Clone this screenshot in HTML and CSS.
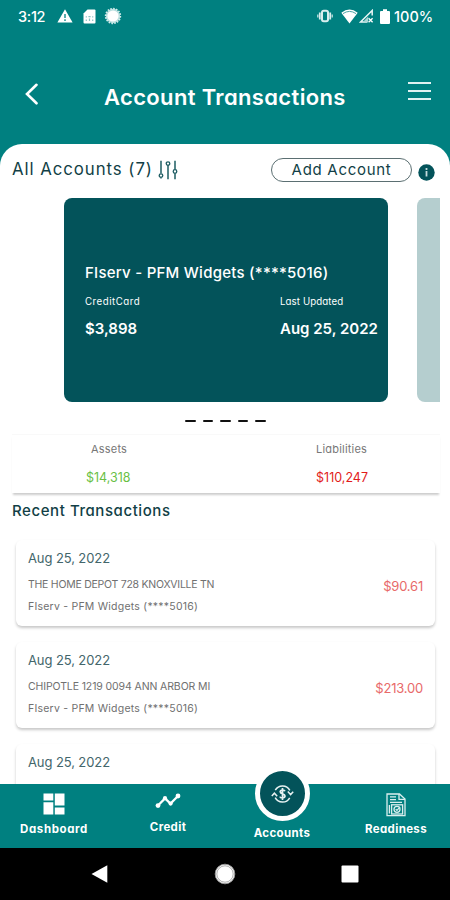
FILE: index.html
```
<!DOCTYPE html>
<html lang="en">
<head>
    <meta charset="UTF-8">
    <meta name="viewport" content="width=device-width, initial-scale=1.0">
    <title>Account Transactions</title>
    <link rel="stylesheet" href="styles.css">
</head>
<body>
    <div class="app">
        <!-- Status bar -->
        <div class="status-bar">
            <span class="time">3:12</span>
            <svg class="warn-icon" width="16" height="14" viewBox="0 0 16 14">
                <path d="M8 0.3 L15.6 13.6 H0.4 Z" fill="#fff"/>
                <path d="M8 5v4M8 10.3v1.6" stroke="#008080" stroke-width="1.3"/>
            </svg>
            <svg class="sim-icon" width="13" height="15" viewBox="0 0 13 15">
                <path d="M4.5 0.5H11.5a1 1 0 0 1 1 1V13.5a1 1 0 0 1-1 1H1.5a1 1 0 0 1-1-1V4.5Z" fill="#fff"/>
                <path d="M3.3 7.2v1.4M9.7 7.2v1.4M3.3 10.6v1.4M9.7 10.6v1.4M6.5 9.5v2.6M5.4 7.6h2.2" stroke="#8cc4c4" stroke-width="1.2"/>
            </svg>
            <svg class="sync-icon" width="18" height="18" viewBox="0 0 18 18">
                <circle cx="9" cy="9" r="7.2" fill="#b9dede"/>
                <circle cx="9" cy="9" r="7.4" fill="none" stroke="#d5ecec" stroke-width="1.6" stroke-dasharray="1.6 1.3"/>
                <circle cx="9" cy="9" r="5.6" fill="#fff"/>
            </svg>
            <div class="status-right">
                <svg width="18" height="14" viewBox="0 0 18 14">
                    <rect x="6" y="1.7" width="6" height="10.6" rx="1.8" fill="none" stroke="#d9eeee" stroke-width="2"/>
                    <path d="M3.8 3.5v7M14.2 3.5v7" stroke="#d9eeee" stroke-width="1.8"/>
                    <path d="M1.8 5.4v3.2M16.2 5.4v3.2" stroke="#a5d2d2" stroke-width="1.6"/>
                </svg>
                <svg class="wifi-icon" width="17" height="15" viewBox="0 0 17 15">
                    <path d="M0.3 3.8Q8.5 -3 16.7 3.8L8.5 14.5Z" fill="#fff"/>
                    <path d="M2 4.6Q8.5 0.2 15 4.6" fill="none" stroke="#4ea5a5" stroke-width="1"/>
                </svg>
                <svg class="signal-icon" width="15" height="14" viewBox="0 0 15 14">
                    <path d="M13.2 6.6V1.5L1.6 13H8.5" fill="none" stroke="#e8f5f5" stroke-width="1.5"/>
                    <path d="M4 13L9.2 7.6V13Z" fill="#a9d5d5"/>
                    <path d="M9.6 9.3l4 4M13.6 9.3l-4 4" stroke="#fff" stroke-width="1.3"/>
                </svg>
                <svg class="battery-icon" width="10" height="15" viewBox="0 0 10 15">
                    <path d="M3 0.3h4V2h2a1 1 0 0 1 1 1V14a1 1 0 0 1-1 1H1a1 1 0 0 1-1-1V3a1 1 0 0 1 1-1h2Z" fill="#fff"/>
                </svg>
                <span class="battery">100%</span>
            </div>
        </div>

        <!-- Title bar -->
        <header class="title-bar">
            <svg class="back-icon" width="14" height="22" viewBox="0 0 14 22">
                <path d="M11.5 1.8L2 11l9.5 9.3" fill="none" stroke="#fff" stroke-width="2.6" stroke-linecap="round"/>
            </svg>
            <h1>Account Transactions</h1>
            <div class="menu-icon">
                <span></span>
                <span></span>
                <span></span>
            </div>
        </header>

        <main class="sheet">
            <div class="accounts-head">
                <h2>All Accounts (7)</h2>
                <svg class="filter-icon" width="20" height="20" viewBox="0 0 20 20">
                    <path d="M3 0.8V13.6M3 17.6V18.6M10 5V19.2M17 0.8V9.5M17 13.5V19.2" stroke="#1d5c62" stroke-width="1.5"/>
                    <circle cx="3" cy="15.6" r="1.8" fill="#fff" stroke="#1d5c62" stroke-width="1.3"/>
                    <circle cx="10" cy="3.6" r="1.8" fill="#fff" stroke="#1d5c62" stroke-width="1.3"/>
                    <circle cx="17" cy="11.5" r="1.8" fill="#fff" stroke="#1d5c62" stroke-width="1.3"/>
                </svg>
                <button class="add-btn">Add Account</button>
                <svg class="info-icon" width="17" height="17" viewBox="0 0 17 17">
                    <circle cx="8.5" cy="8.5" r="8.2" fill="#03535a"/>
                    <path d="M8.5 7v5.4M8.5 4v2" stroke="#c4dadb" stroke-width="1.8"/>
                </svg>
            </div>

            <!-- Account cards -->
            <div class="carousel">
                <div class="account-card">
                    <div class="account-name">FIserv - PFM Widgets (****5016)</div>
                    <div class="account-info">
                        <div class="balance">
                            <div class="label">CreditCard</div>
                            <div class="value">$3,898</div>
                        </div>
                        <div class="updated">
                            <div class="label">Last Updated</div>
                            <div class="value">Aug 25, 2022</div>
                        </div>
                    </div>
                </div>
                <div class="account-card next"></div>
            </div>
            <div class="pager">
                <span></span><span></span><span></span><span></span><span></span>
            </div>

            <div class="summary">
                <div class="summary-item assets">
                    <div class="label">Assets</div>
                    <div class="amount">$14,318</div>
                </div>
                <div class="summary-item liabilities">
                    <div class="label">Liabilities</div>
                    <div class="amount">$110,247</div>
                </div>
            </div>

            <h3>Recent Transactions</h3>
            <div class="transactions">
                <div class="transaction">
                    <div>
                        <div class="date">Aug 25, 2022</div>
                        <div class="merchant depot">THE HOME DEPOT 728 KNOXVILLE TN</div>
                        <div class="source">FIserv - PFM Widgets (****5016)</div>
                    </div>
                    <div class="price">$90.61</div>
                </div>
                <div class="transaction">
                    <div>
                        <div class="date">Aug 25, 2022</div>
                        <div class="merchant chipotle">CHIPOTLE 1219 0094 ANN ARBOR MI</div>
                        <div class="source">FIserv - PFM Widgets (****5016)</div>
                    </div>
                    <div class="price">$213.00</div>
                </div>
                <div class="transaction">
                    <div>
                        <div class="date">Aug 25, 2022</div>
                    </div>
                </div>
            </div>
        </main>

        <!-- Bottom tabs -->
        <nav class="tabs">
            <div class="tab dashboard">
                <svg width="22" height="22" viewBox="0 0 22 22" fill="#fff">
                    <path d="M0.5 0.5h9.8v7H0.5zM0.5 9.3h9.8v12.2H0.5zM11.8 0.5h9.7v12h-9.7zM11.8 14.5h9.7v7h-9.7z"/>
                </svg>
                <span>Dashboard</span>
            </div>
            <div class="tab credit">
                <svg width="26" height="16" viewBox="0 0 26 16" fill="#fff">
                    <path d="M3 12.6L10 5.4L15.5 10.6L23 3" fill="none" stroke="#fff" stroke-width="2.2"/>
                    <circle cx="3" cy="12.6" r="2.4"/>
                    <circle cx="10" cy="5.2" r="2.1"/>
                    <circle cx="15.6" cy="10.6" r="2.1"/>
                    <circle cx="23" cy="3" r="2.4"/>
                </svg>
                <span>Credit</span>
            </div>
            <div class="tab accounts">
                <div class="circle">
                    <svg width="23" height="20" viewBox="0 0 23 20" fill="none" stroke="#e8f2f2" stroke-width="1.5">
                        <path d="M4.3 6.2A8.2 8.2 0 0 1 18.8 6.4"/>
                        <path d="M18.7 13.8A8.2 8.2 0 0 1 4.2 13.6"/>
                        <path d="M0.8 12L3.4 9.2L6.2 12.2M22.2 7.8L19.6 10.6L16.8 7.6"/>
                        <path d="M14 7.2C13.5 5.8 9.4 5.5 9.2 7.8C9.2 10.4 14 9.4 14 12.1C13.7 14.4 9.3 14.2 8.9 12.6M11.5 4v12" stroke-width="1.7"/>
                    </svg>
                </div>
                <span>Accounts</span>
            </div>
            <div class="tab readiness">
                <svg width="20" height="24" viewBox="0 0 20 24" fill="none" stroke="#d9eeee" stroke-width="1.3">
                    <path d="M1 1H13.5L19 6V22.6H1Z"/>
                    <path d="M13 1V6.4H19M4 3.8h6M4 6.6h6M4 9.4h12M3.4 12V20.6"/>
                    <rect x="5.6" y="11.8" width="11" height="9.2"/>
                    <circle cx="11" cy="16.3" r="3"/>
                    <path d="M9.7 16.2l1.3 1.2l3-3.6"/>
                </svg>
                <span>Readiness</span>
            </div>
        </nav>

        <!-- System navigation -->
        <div class="system-nav">
            <svg width="17" height="18" viewBox="0 0 17 18"><path d="M0.5 9L16.3 0.3V17.7Z" fill="#fff"/></svg>
            <svg width="22" height="22" viewBox="0 0 22 22">
                <circle cx="11" cy="11" r="9.8" fill="#fff" stroke="#999" stroke-width="1"/>
                <circle cx="11" cy="11" r="8.2" fill="#fff" stroke="#999" stroke-width="0.8"/>
            </svg>
            <svg width="18" height="18" viewBox="0 0 18 18"><rect x="0.5" y="0.5" width="17" height="17" rx="1" fill="#fff"/></svg>
        </div>
    </div>
</body>
</html>
```
FILE: styles.css
```
* {
    box-sizing: border-box;
}

body {
    margin: 0;
    font-family: Inter, "Open Sans", sans-serif;
    font-feature-settings: "cv11";
    background-color: #008080;
    color: #123f46;
    white-space: nowrap;
}

h1, h2, h3 {
    margin: 0;
}

svg {
    display: block;
    flex-shrink: 0;
}

.app {
    width: 450px;
    height: 900px;
    display: flex;
    flex-direction: column;
    overflow: hidden;
}

/* Status bar */
.status-bar {
    height: 32px;
    padding: 0 16px 0 18px;
    display: flex;
    align-items: center;
    color: #fff;
    font-size: 14.5px;
    font-weight: 500;
}

.time {
    width: 39px;
    letter-spacing: -0.3px;
}

.sim-icon {
    margin-left: 10px;
}

.sync-icon {
    margin-left: 8px;
}

.status-right {
    margin-left: auto;
    display: flex;
    align-items: center;
}

.wifi-icon {
    margin-left: 7px;
}

.signal-icon {
    margin-left: 1px;
}

.battery-icon {
    margin-left: 6px;
}

.battery {
    width: 40px;
    margin-left: 4px;
}

/* Title bar */
.title-bar {
    height: 112px;
    padding: 0 19px 0 25px;
    display: flex;
    align-items: flex-start;
    color: #fff;
}

.back-icon {
    margin-top: 51px;
}

.title-bar h1 {
    flex: 1;
    margin-top: 51px;
    padding-left: 65px;
    font-size: 22px;
    line-height: 28px;
    font-weight: 600;
    letter-spacing: 0.35px;
}

.menu-icon {
    width: 23px;
    margin-top: 50px;
    display: flex;
    flex-direction: column;
    gap: 6px;
}

.menu-icon span {
    height: 2px;
    background-color: #e0f2f2;
}

/* White sheet */
.sheet {
    flex: 1;
    min-height: 0;
    overflow: hidden;
    background-color: #fff;
    border-radius: 22px 22px 0 0;
}

.accounts-head {
    height: 54px;
    padding: 0 15px 0 12px;
    display: flex;
    align-items: flex-start;
}

.accounts-head h2 {
    width: 146px;
    margin-top: 14px;
    font-size: 16.8px;
    line-height: 22px;
    font-weight: 400;
    letter-spacing: 0.95px;
}

.filter-icon {
    margin-top: 16px;
}

.add-btn {
    width: 141px;
    height: 24px;
    margin: 14px 0 0 auto;
    padding: 0;
    border: 1px solid #5b6f72;
    border-radius: 12px;
    background: none;
    color: #123f46;
    font: inherit;
    font-size: 15px;
    line-height: 20px;
    letter-spacing: 0.7px;
}

.info-icon {
    margin: 20px 0 0 6px;
}

/* Account cards */
.carousel {
    height: 204px;
    margin: 0 10px 0 64px;
    display: flex;
    gap: 29px;
    overflow: hidden;
}

.account-card {
    width: 324px;
    flex-shrink: 0;
    padding: 64px 0 0 21px;
    border-radius: 8px;
    background-color: #03535a;
    color: #fff;
}

.account-card.next {
    background-color: #b5cecf;
}

.account-name {
    font-size: 15px;
    line-height: 22px;
    font-weight: 500;
    letter-spacing: 0.25px;
}

.account-info {
    margin-top: 11px;
    display: flex;
}

.balance {
    width: 195px;
}

.account-info .label {
    font-size: 9.7px;
    line-height: 14px;
    letter-spacing: 0.1px;
}

.balance .label {
    letter-spacing: 0.5px;
}

.account-info .value {
    margin-top: 10px;
    font-size: 15px;
    line-height: 20px;
    font-weight: 600;
}

.pager {
    height: 32px;
    padding: 18px 0 0 185px;
    display: flex;
    gap: 7px;
}

.pager span {
    width: 10.5px;
    height: 2px;
    border-radius: 1px;
    background-color: #111;
}

/* Assets and liabilities */
.summary {
    height: 59px;
    margin: 0 10px 0 12px;
    padding: 7px 72px 0 74px;
    display: flex;
    justify-content: space-between;
    border-top: 1px solid #f9f9f9;
    box-shadow: 0 3px 2px -1px rgba(0, 0, 0, 0.2);
}

.summary .label {
    color: #777;
    font-size: 11px;
    line-height: 14px;
    letter-spacing: 0.2px;
}

.assets .label {
    padding-left: 5px;
}

.summary .amount {
    margin-top: 13px;
    font-size: 12.5px;
    line-height: 18px;
}

.assets .amount {
    color: #6abf45;
}

.liabilities .amount {
    color: #e21b1b;
}

/* Transactions */
.sheet h3 {
    margin: 8px 0 0 12px;
    font-size: 15px;
    line-height: 20px;
    font-weight: 500;
    letter-spacing: 0.57px;
}

.transactions {
    padding: 19px 15px 0 16px;
    display: flex;
    flex-direction: column;
    gap: 16px;
}

.transaction {
    height: 86px;
    padding: 9px 12px 0;
    display: flex;
    justify-content: space-between;
    border-radius: 6px;
    background-color: #fff;
    box-shadow: 0 2px 3px rgba(0, 0, 0, 0.22);
}

.date {
    color: #43666b;
    font-size: 13px;
    line-height: 18px;
    letter-spacing: -0.1px;
}

.merchant, .source {
    color: #707070;
    font-size: 10.5px;
    line-height: 16px;
}

.merchant {
    margin-top: 10px;
}

.depot {
    letter-spacing: -0.25px;
}

.chipotle {
    letter-spacing: -0.11px;
}

.source {
    margin-top: 6px;
    letter-spacing: 0.23px;
}

.price {
    margin-top: 28px;
    color: #e86a6a;
    font-size: 13px;
    line-height: 18px;
    letter-spacing: -0.2px;
}

/* Bottom tabs */
.tabs {
    height: 64px;
    display: grid;
    grid-template-columns: repeat(4, 114px);
    justify-content: center;
    background-color: #008080;
    color: #fff;
    font-size: 11.5px;
    font-weight: 700;
    line-height: 16px;
    letter-spacing: 0.35px;
}

.tab {
    display: flex;
    flex-direction: column;
    align-items: center;
}

.dashboard {
    letter-spacing: 0.6px;
}

.dashboard svg {
    margin: 9px 0 6px;
}

.credit svg {
    margin: 9px 0 10px;
}

.readiness svg {
    margin: 9px 0 4px;
}

.circle {
    width: 55px;
    height: 55px;
    margin: -18px 0 4px;
    display: flex;
    align-items: center;
    justify-content: center;
    border: 5px solid #fff;
    border-radius: 50%;
    background-color: #03535a;
}

/* System navigation */
.system-nav {
    height: 52px;
    padding: 0 91px;
    display: flex;
    align-items: center;
    justify-content: space-between;
    background-color: #000;
}
```
